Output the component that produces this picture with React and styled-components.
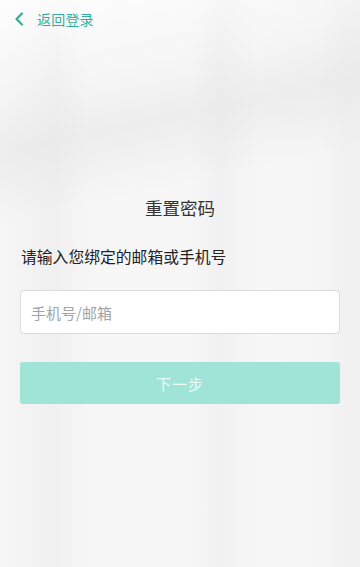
import React from "react";
import styled, { createGlobalStyle } from "styled-components";

const GlobalStyle = createGlobalStyle`
  html, body {
    margin: 0;
    padding: 0;
  }
  body {
    font-family: "Noto Sans CJK SC", "Noto Sans", sans-serif;
  }
  * {
    box-sizing: border-box;
  }
`;

const Page = styled.div`
  width: 360px;
  height: 567px;
  overflow: hidden;
  display: flex;
  flex-direction: column;
  background-color: #f3f3f3;
  background-image:
    linear-gradient(168deg, rgba(255, 255, 255, 0.85) 0px, rgba(255, 255, 255, 0) 90px, rgba(228, 228, 228, 0.5) 150px, rgba(255, 255, 255, 0) 220px),
    linear-gradient(90deg, rgba(250, 250, 250, 0.4) 0px, rgba(236, 236, 236, 0.4) 55px, rgba(250, 250, 250, 0.5) 90px, rgba(250, 250, 250, 0.5) 190px, rgba(238, 238, 238, 0.4) 220px, rgba(250, 250, 250, 0.5) 260px, rgba(248, 248, 248, 0.4) 320px, rgba(238, 238, 238, 0.4) 345px);
`;

const TopBar = styled.div`
  display: flex;
  align-items: center;
  gap: 13px;
  padding-left: 14px;
  height: 38px;
  color: #35ad9b;
`;

const BackIcon = styled.svg`
  width: 10px;
  height: 14px;
  flex-shrink: 0;
`;

const BackText = styled.span`
  font-size: 14px;
  line-height: 16px;
  letter-spacing: 0.2px;
`;

const Content = styled.div`
  display: flex;
  flex-direction: column;
  padding: 158px 20px 0;
`;

const Title = styled.h1`
  margin: 0;
  text-align: center;
  font-size: 17.5px;
  font-weight: 400;
  line-height: 24px;
  color: #333;
`;

const Label = styled.p`
  margin: 26px 0 0 1px;
  font-size: 15.8px;
  line-height: 22px;
  color: #222;
`;

const Input = styled.input`
  margin-top: 22px;
  height: 44px;
  width: 100%;
  padding: 0 10px;
  background: #fff;
  border: 1px solid #dcdcdc;
  border-radius: 4px;
  font-family: inherit;
  font-size: 15px;
  color: #333;
  outline: none;

  &::placeholder {
    color: #a3a3a3;
  }
`;

const Button = styled.button`
  margin-top: 28px;
  height: 42px;
  width: 100%;
  border: none;
  border-radius: 3px;
  background: #a0e4d8;
  color: #eefaf8;
  font-family: inherit;
  font-size: 15px;
  letter-spacing: 1px;
`;

export default function App() {
  return (
    <>
      <GlobalStyle />
      <Page>
        <TopBar>
          <BackIcon viewBox="0 0 10 14">
            <path
              d="M8 1.5 L2.5 7 L8 12.5"
              fill="none"
              stroke="currentColor"
              strokeWidth="2.2"
              strokeLinecap="round"
              strokeLinejoin="round"
            />
          </BackIcon>
          <BackText>返回登录</BackText>
        </TopBar>
        <Content>
          <Title>重置密码</Title>
          <Label>请输入您绑定的邮箱或手机号</Label>
          <Input placeholder="手机号/邮箱" />
          <Button>下一步</Button>
        </Content>
      </Page>
    </>
  );
}
